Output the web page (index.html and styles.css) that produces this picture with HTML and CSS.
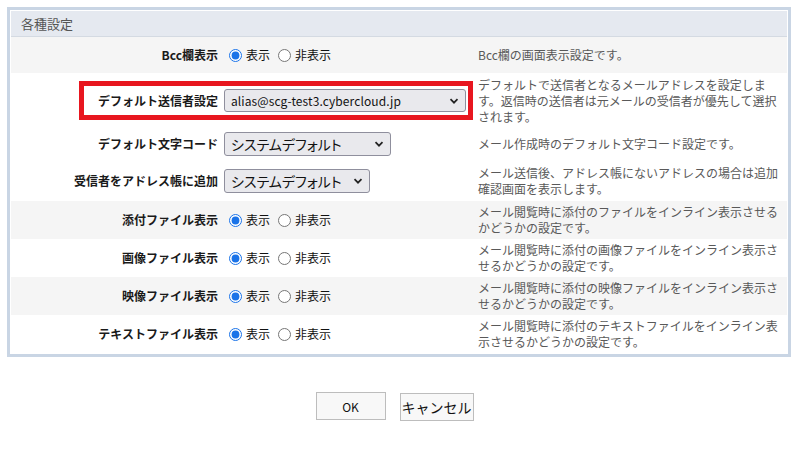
FILE: index.html
```html
<!DOCTYPE html>
<html lang="ja">
<head>
<meta charset="utf-8">
<title>各種設定</title>
<link rel="stylesheet" href="styles.css">
</head>
<body>
<div class="panel">
  <div class="panel-head">各種設定</div>

  <div class="row shade h36">
    <div class="label">Bcc欄表示</div>
    <div class="ctrl">
      <label class="radio"><input type="radio" name="bcc" checked><span>表示</span></label>
      <label class="radio"><input type="radio" name="bcc"><span>非表示</span></label>
    </div>
    <div class="desc">Bcc欄の画面表示設定です。</div>
  </div>

  <div class="row h55 marked">
    <div class="label">デフォルト送信者設定</div>
    <div class="ctrl">
      <span class="select-wrap sel-sender">
        <select class="select select-sm"><option>alias@scg-test3.cybercloud.jp</option></select>
        <svg class="chev" width="10" height="6" viewBox="0 0 10 6"><path d="M1.5 1.2l3.5 3.5 3.5-3.5" fill="none" stroke="#222" stroke-width="1.7"/></svg>
      </span>
    </div>
    <div class="desc">デフォルトで送信者となるメールアドレスを設定します。返信時の送信者は元メールの受信者が優先して選択されます。</div>
    <div class="highlight"></div>
  </div>

  <div class="row h32">
    <div class="label">デフォルト文字コード</div>
    <div class="ctrl">
      <span class="select-wrap sel-code">
        <select class="select select-lg"><option>システムデフォルト</option></select>
        <svg class="chev" width="10" height="6" viewBox="0 0 10 6"><path d="M1.5 1.2l3.5 3.5 3.5-3.5" fill="none" stroke="#222" stroke-width="1.7"/></svg>
      </span>
    </div>
    <div class="desc">メール作成時のデフォルト文字コード設定です。</div>
  </div>

  <div class="row h41">
    <div class="label">受信者をアドレス帳に追加</div>
    <div class="ctrl">
      <span class="select-wrap sel-addr">
        <select class="select select-lg"><option>システムデフォルト</option></select>
        <svg class="chev" width="10" height="6" viewBox="0 0 10 6"><path d="M1.5 1.2l3.5 3.5 3.5-3.5" fill="none" stroke="#222" stroke-width="1.7"/></svg>
      </span>
    </div>
    <div class="desc">メール送信後、アドレス帳にないアドレスの場合は追加確認画面を表示します。</div>
  </div>

  <div class="row shade h38">
    <div class="label">添付ファイル表示</div>
    <div class="ctrl">
      <label class="radio"><input type="radio" name="att" checked><span>表示</span></label>
      <label class="radio"><input type="radio" name="att"><span>非表示</span></label>
    </div>
    <div class="desc">メール閲覧時に添付のファイルをインライン表示させるかどうかの設定です。</div>
  </div>

  <div class="row h38">
    <div class="label">画像ファイル表示</div>
    <div class="ctrl">
      <label class="radio"><input type="radio" name="img" checked><span>表示</span></label>
      <label class="radio"><input type="radio" name="img"><span>非表示</span></label>
    </div>
    <div class="desc">メール閲覧時に添付の画像ファイルをインライン表示させるかどうかの設定です。</div>
  </div>

  <div class="row shade h38">
    <div class="label">映像ファイル表示</div>
    <div class="ctrl">
      <label class="radio"><input type="radio" name="mov" checked><span>表示</span></label>
      <label class="radio"><input type="radio" name="mov"><span>非表示</span></label>
    </div>
    <div class="desc">メール閲覧時に添付の映像ファイルをインライン表示させるかどうかの設定です。</div>
  </div>

  <div class="row h38">
    <div class="label">テキストファイル表示</div>
    <div class="ctrl">
      <label class="radio"><input type="radio" name="txt" checked><span>表示</span></label>
      <label class="radio"><input type="radio" name="txt"><span>非表示</span></label>
    </div>
    <div class="desc">メール閲覧時に添付のテキストファイルをインライン表示させるかどうかの設定です。</div>
  </div>
</div>

<div class="actions">
  <button class="btn btn-ok">OK</button>
  <button class="btn btn-cancel">キャンセル</button>
</div>
</body>
</html>
```

FILE: styles.css
```css
* { box-sizing: border-box; }

body {
  margin: 0;
  padding: 7px;
  background: #fff;
  font-family: "Noto Sans CJK JP", "Noto Sans", sans-serif;
  font-size: 12px;
  color: #222;
}

.panel {
  width: 784px;
  height: 350px;
  border: 3px solid #c9d5e4;
  padding: 1px;
  background: #fff;
}

.panel-head {
  height: 26px;
  background: #e5e9f0;
  border-bottom: 1px solid #d4dae2;
  padding-left: 10px;
  font-size: 13px;
  line-height: 25px;
  color: #555;
}

.row {
  display: grid;
  grid-template-columns: 213px 254px 300px;
  align-items: center;
  position: relative;
}

.shade { background: #f5f5f5; }

.h36 { height: 36px; }
.h55 { height: 55px; }
.h32 { height: 32px; }
.h41 { height: 41px; }
.h38 { height: 38px; }

.label {
  text-align: right;
  padding-right: 6px;
  font-weight: bold;
  color: #1a1a1a;
  line-height: 16px;
  white-space: nowrap;
}

.ctrl {
  display: flex;
  align-items: center;
}

.desc {
  color: #595959;
  line-height: 16px;
}

.radio {
  display: inline-flex;
  align-items: center;
  line-height: 16px;
  color: #111;
}

.radio input {
  width: 13px;
  height: 13px;
  margin: 0 4px 0 5px;
  accent-color: #1a73e8;
}

.radio span { margin-right: 3px; }

.select-wrap {
  position: relative;
  display: inline-block;
}

.select {
  appearance: none;
  -webkit-appearance: none;
  background: #e9e9ed;
  border: 1px solid #8f8f9d;
  border-radius: 3px;
  color: #111;
  font-family: "Noto Sans CJK JP", "Noto Sans", sans-serif;
  padding: 0 0 0 6px;
  display: block;
}

.select-sm {
  width: 242px;
  height: 23px;
  font-size: 12px;
  line-height: 21px;
  letter-spacing: 0.1px;
}

.select-lg {
  height: 24px;
  font-size: 14px;
  line-height: 22px;
  font-feature-settings: "palt";
}

.sel-code .select { width: 167px; }
.sel-addr .select { width: 146px; }

.chev {
  position: absolute;
  right: 7px;
  top: 50%;
  margin-top: -3px;
  pointer-events: none;
}

.highlight {
  position: absolute;
  left: 68px;
  top: 8px;
  width: 394px;
  height: 39px;
  border: 5px solid #e8161f;
  pointer-events: none;
}

.actions {
  display: flex;
  justify-content: center;
  gap: 14px;
  margin-top: 35px;
  padding-right: 8px;
}

.btn {
  height: 28px;
  background: #f8f8f8;
  border: 1px solid #bdbdbd;
  border-radius: 0;
  color: #111;
  font-family: "Noto Sans CJK JP", "Noto Sans", sans-serif;
  padding: 0;
}

.btn-ok {
  width: 70px;
  font-size: 12px;
}

.btn-cancel {
  width: 74px;
  font-size: 14px;
  margin-top: 1px;
}
```
